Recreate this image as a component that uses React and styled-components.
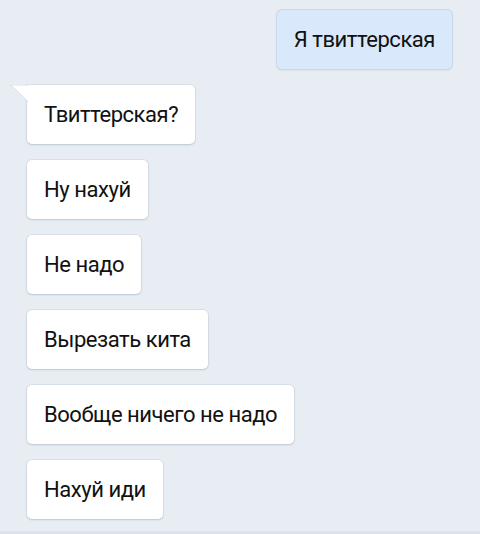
import React from 'react';
import styled, { createGlobalStyle } from 'styled-components';

const Global = createGlobalStyle`
  html, body {
    margin: 0;
    padding: 0;
    background: #e7edf3;
  }
  body {
    font-family: Roboto, "Liberation Sans", sans-serif;
  }
`;

const Chat = styled.div`
  width: 480px;
  height: 534px;
  box-sizing: border-box;
  padding: 10px 27px 0 27px;
  display: flex;
  flex-direction: column;
  gap: 16px;
  border-bottom: 3px solid #dde3ea;
  overflow: hidden;
`;

const Row = styled.div`
  display: flex;
  justify-content: ${(p) => (p.$out ? 'flex-end' : 'flex-start')};
  padding-right: ${(p) => (p.$out ? '1px' : '0')};
`;

const Bubble = styled.div`
  position: relative;
  box-sizing: border-box;
  height: 59px;
  display: flex;
  align-items: center;
  padding: 0 17px 1px;
  font-size: 22px;
  letter-spacing: -0.45px;
  color: #111;
  white-space: nowrap;
  border-radius: 5px;
  background: ${(p) => (p.$out ? '#d9e8fa' : '#ffffff')};
  box-shadow: ${(p) =>
    p.$out
      ? '0 0 0 1px #c9d7e6, 0 1px 2px rgba(120,140,160,0.35)'
      : '0 1px 2px rgba(120,140,160,0.3), 0 0 0 1px rgba(210,218,226,0.6)'};
  ${(p) => p.$tail && 'border-top-left-radius: 0;'}
`;

const Tail = styled.svg`
  position: absolute;
  left: -17px;
  top: 0;
  width: 18px;
  height: 18px;
`;

const messages = [
  { out: true, text: 'Я твиттерская' },
  { text: 'Твиттерская?', tail: true },
  { text: 'Ну нахуй' },
  { text: 'Не надо' },
  { text: 'Вырезать кита' },
  { text: 'Вообще ничего не надо' },
  { text: 'Нахуй иди' },
];

export default function App() {
  return (
    <>
      <Global />
      <Chat>
        {messages.map((m, i) => (
          <Row key={i} $out={m.out}>
            <Bubble $out={m.out} $tail={m.tail}>
              {m.tail && (
                <Tail viewBox="0 0 18 18">
                  <path d="M18 0 L0 0 Q8 6 18 17 Z" fill="#ffffff" />
                  <path d="M18 0 L0 0 Q8 6 18 17" fill="none" stroke="rgba(200,210,222,0.7)" strokeWidth="1" />
                </Tail>
              )}
              {m.text}
            </Bubble>
          </Row>
        ))}
      </Chat>
    </>
  );
}
